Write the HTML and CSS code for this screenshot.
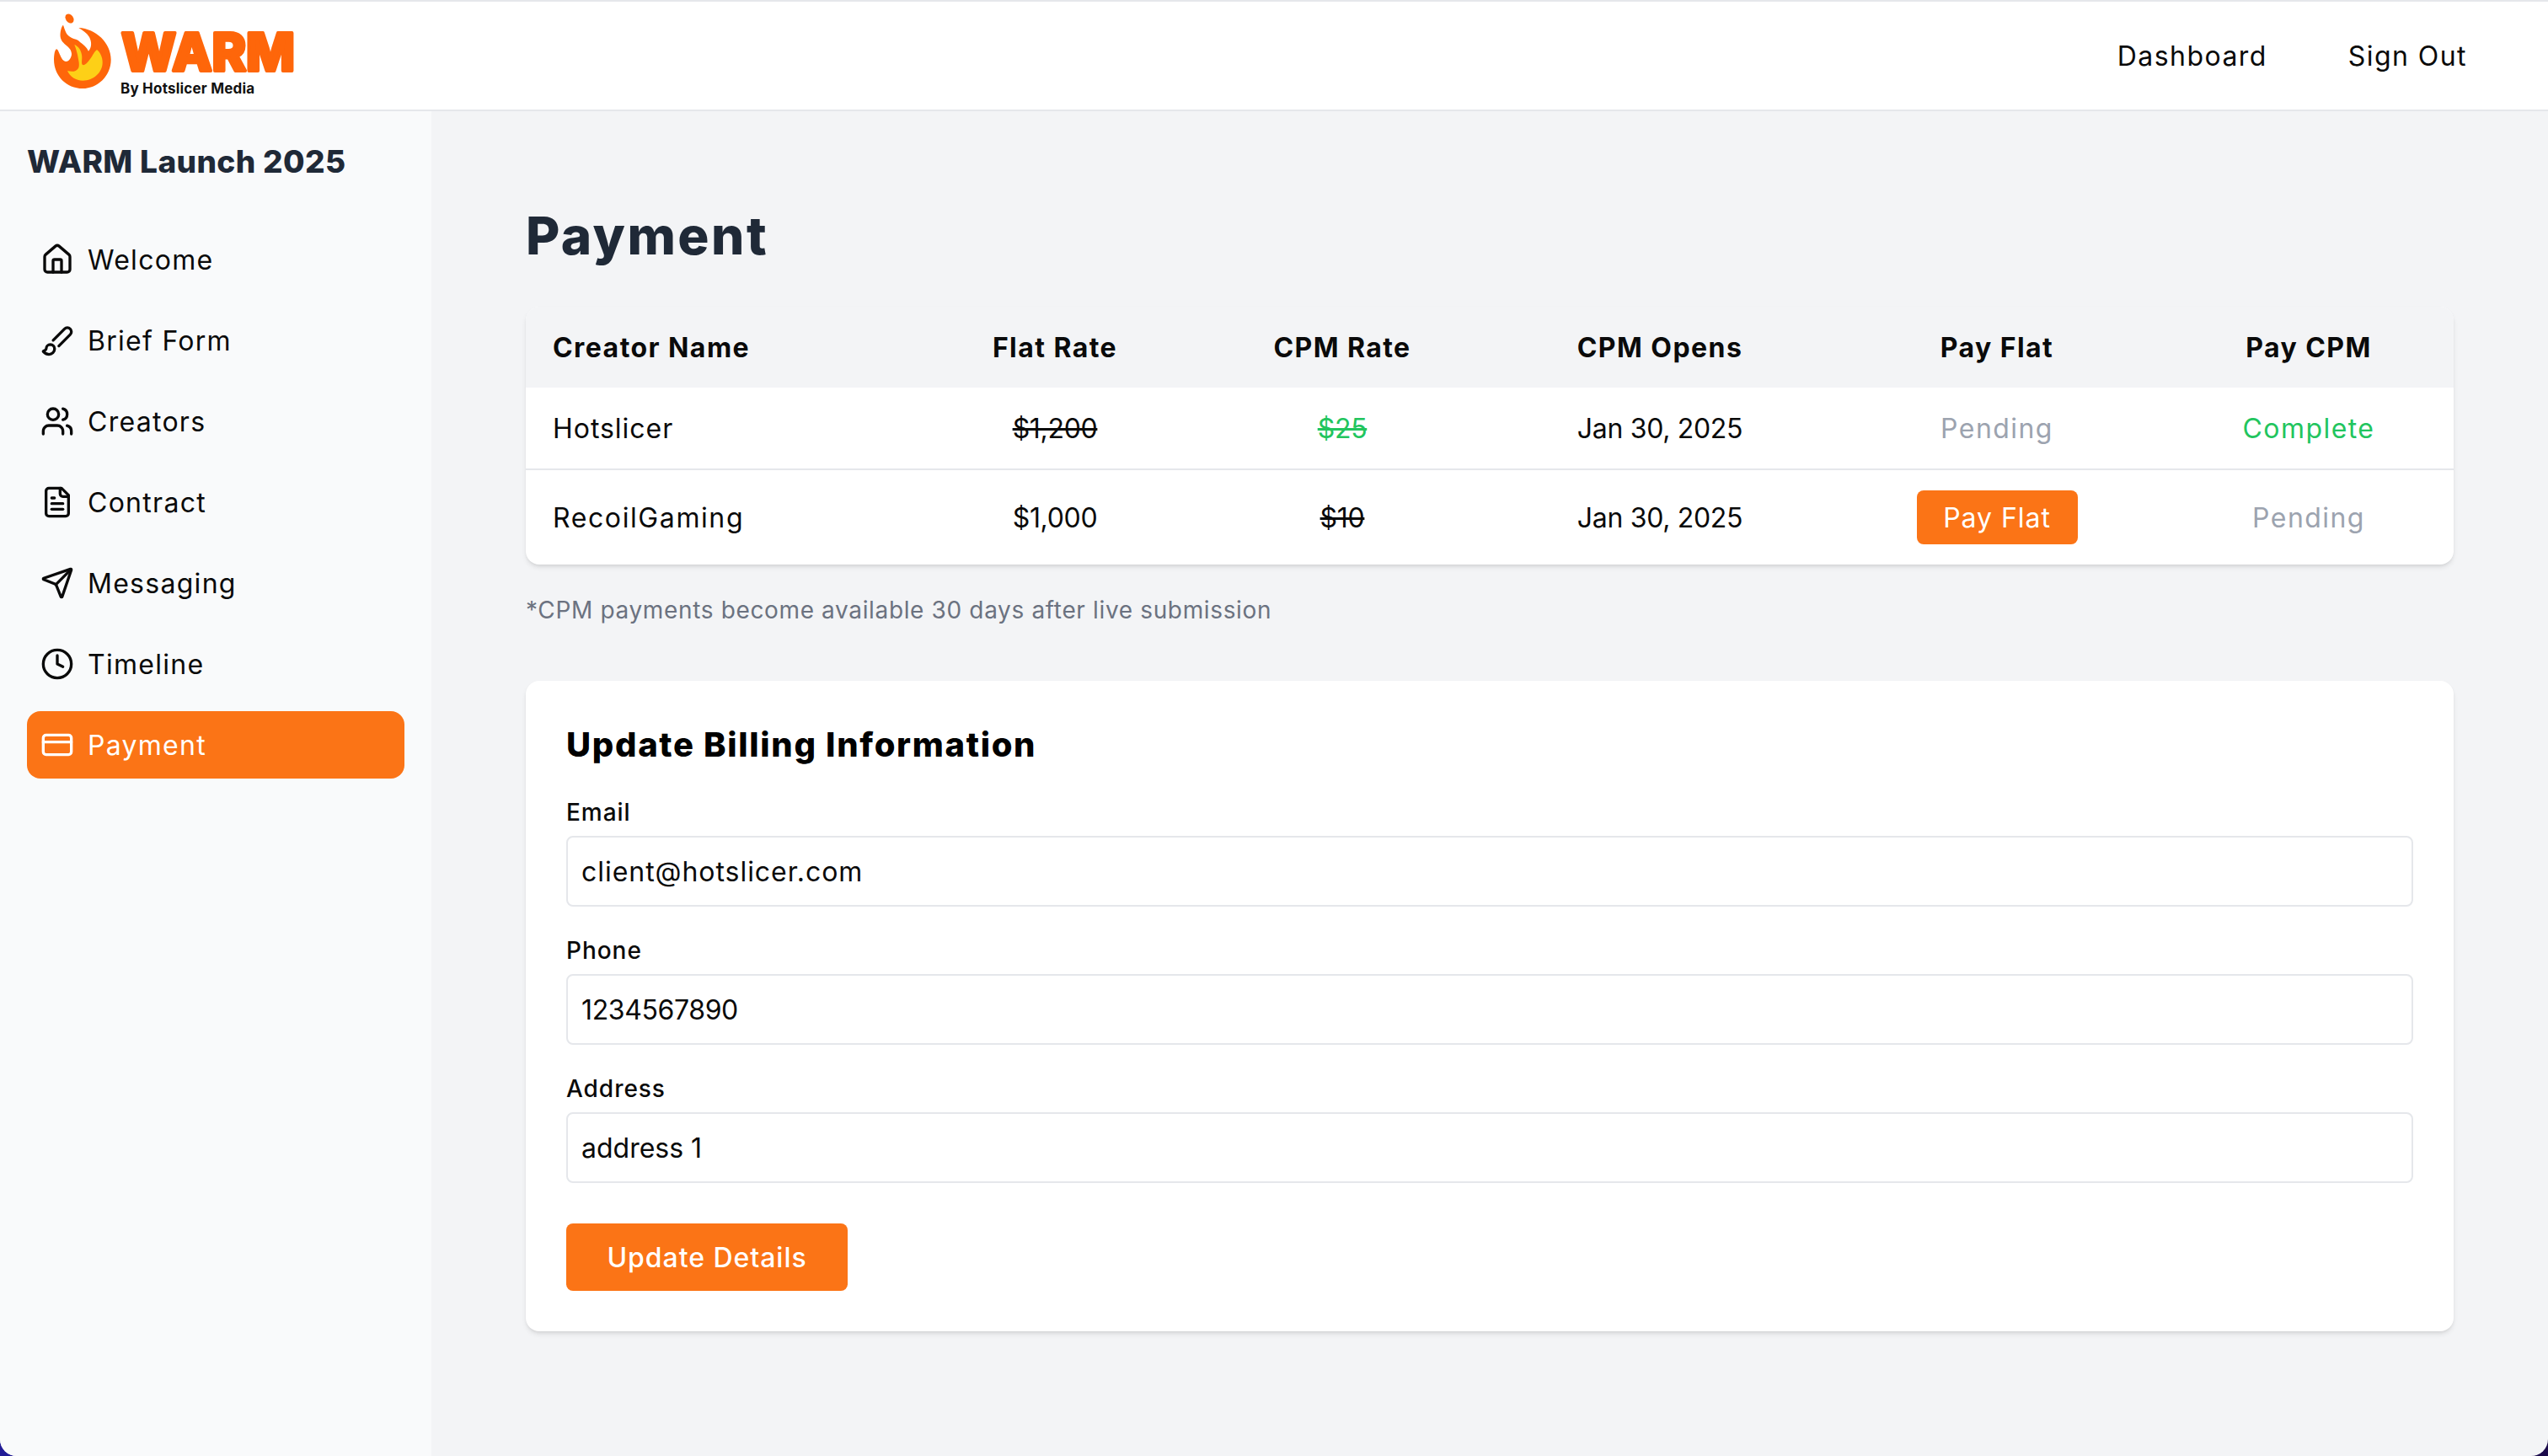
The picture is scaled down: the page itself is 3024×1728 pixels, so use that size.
FILE: index.html
```html
<!DOCTYPE html>
<html lang="en">
<head>
    <meta charset="utf-8">
    <title>Payment</title>
    <link rel="stylesheet" href="styles.css">
</head>
<body>
    <div class="app">
        <header class="topbar">
            <a class="logo" href="#">
                <svg class="logo-art" viewBox="0 0 300 104" width="300" height="104">
                    <ellipse cx="18.5" cy="7" rx="4.5" ry="6" transform="rotate(-35 18.5 7)" fill="#fe660a"/>
                    <path fill="#fe660a" d="M11 14.7C13 20 14 25 18 28C23 32 28 31 31 35C35 38 39 41 41 45.7C45 41 45 35 42 29C39 24 34 21 29.3 18C50 19 67.7 36 67.7 55.7C67.7 75 52 90 34 90C15 90 0 75 0 55.7C0 50 1 44 3 43.3C6 43 8 58 14.3 58C18 58 21 53 21 49C21 40 9 38 7.7 29C7 23 9 16 11 14.7Z"/>
                    <path fill="#fdd017" d="M24.3 38C29 40 32 44 33 50C34 55 32 60 34 62C37 63 40 59 43 55C46 51 48 46 51 44C55 47 57.7 53 57.7 59C57.7 71 47 80.7 34.3 80.7C26 80.7 19 76 16 69C20 70 26 71 29 66C31 62 29 56 28 50C27 46 26 42 24.3 38Z"/>
                    <text class="logo-word" x="80" y="69" textLength="206" lengthAdjust="spacingAndGlyphs">WARM</text>
                </svg>
                <span class="logo-by">By Hotslicer Media</span>
            </a>
            <nav class="topnav">
                <a href="#">Dashboard</a>
                <a href="#">Sign Out</a>
            </nav>
        </header>
        <div class="body-row">
            <aside class="sidebar">
                <h2>WARM Launch 2025</h2>
                <ul class="menu">
                    <li><a href="#">
                        <svg class="icon" viewBox="0 0 24 24"><path d="M15 21v-8a1 1 0 0 0-1-1h-4a1 1 0 0 0-1 1v8"/><path d="M3 10a2 2 0 0 1 .709-1.528l7-5.999a2 2 0 0 1 2.582 0l7 5.999A2 2 0 0 1 21 10v9a2 2 0 0 1-2 2H5a2 2 0 0 1-2-2z"/></svg>
                        Welcome</a></li>
                    <li><a href="#">
                        <svg class="icon" viewBox="0 0 24 24"><path d="m9.06 11.9 8.07-8.06a2.85 2.85 0 1 1 4.03 4.03l-8.06 8.08"/><path d="M7.07 14.94c-1.66 0-3 1.35-3 3.02 0 1.33-2.5 1.52-2 2.02 1.08 1.1 2.49 2.02 4 2.02 2.2 0 4-1.8 4-4.04a3.01 3.01 0 0 0-3-3.02z"/></svg>
                        Brief Form</a></li>
                    <li><a href="#">
                        <svg class="icon" viewBox="0 0 24 24"><path d="M16 21v-2a4 4 0 0 0-4-4H6a4 4 0 0 0-4 4v2"/><circle cx="9" cy="7" r="4"/><path d="M22 21v-2a4 4 0 0 0-3-3.87"/><path d="M16 3.13a4 4 0 0 1 0 7.75"/></svg>
                        Creators</a></li>
                    <li><a href="#">
                        <svg class="icon" viewBox="0 0 24 24"><path d="M15 2H6a2 2 0 0 0-2 2v16a2 2 0 0 0 2 2h12a2 2 0 0 0 2-2V7Z"/><path d="M14 2v4a2 2 0 0 0 2 2h4"/><path d="M10 9H8"/><path d="M16 13H8"/><path d="M16 17H8"/></svg>
                        Contract</a></li>
                    <li><a href="#">
                        <svg class="icon" viewBox="0 0 24 24"><path d="M14.536 21.686a.5.5 0 0 0 .937-.024l6.5-19a.496.496 0 0 0-.635-.635l-19 6.5a.5.5 0 0 0-.024.937l7.93 3.18a2 2 0 0 1 1.112 1.11z"/><path d="m21.854 2.147-10.94 10.939"/></svg>
                        Messaging</a></li>
                    <li><a href="#">
                        <svg class="icon" viewBox="0 0 24 24"><circle cx="12" cy="12" r="10"/><polyline points="12 6 12 12 16 14"/></svg>
                        Timeline</a></li>
                    <li><a class="active" href="#">
                        <svg class="icon" viewBox="0 0 24 24"><rect width="20" height="14" x="2" y="5" rx="2"/><line x1="2" x2="22" y1="10" y2="10"/></svg>
                        Payment</a></li>
                </ul>
            </aside>
            <main class="content">
                <h1>Payment</h1>
                <div class="table-box">
                    <table>
                        <colgroup>
                            <col class="col-name"><col class="col-flat"><col class="col-cpm">
                            <col class="col-opens"><col class="col-payflat"><col class="col-paycpm">
                        </colgroup>
                        <thead>
                            <tr>
                                <th class="left">Creator Name</th>
                                <th>Flat Rate</th>
                                <th>CPM Rate</th>
                                <th>CPM Opens</th>
                                <th>Pay Flat</th>
                                <th>Pay CPM</th>
                            </tr>
                        </thead>
                        <tbody>
                            <tr class="row-one">
                                <td class="left">Hotslicer</td>
                                <td class="num struck">$1,200</td>
                                <td class="num struck green">$25</td>
                                <td class="num">Jan 30, 2025</td>
                                <td class="status muted">Pending</td>
                                <td class="status green">Complete</td>
                            </tr>
                            <tr class="row-two">
                                <td class="left">RecoilGaming</td>
                                <td class="num">$1,000</td>
                                <td class="num struck">$10</td>
                                <td class="num">Jan 30, 2025</td>
                                <td><button class="btn btn-small">Pay Flat</button></td>
                                <td class="status muted">Pending</td>
                            </tr>
                        </tbody>
                    </table>
                </div>
                <p class="note">*CPM payments become available 30 days after live submission</p>
                <form class="card">
                    <h3>Update Billing Information</h3>
                    <div class="field">
                        <label>Email</label>
                        <input type="text" value="client@hotslicer.com">
                    </div>
                    <div class="field">
                        <label>Phone</label>
                        <input class="num" type="text" value="1234567890">
                    </div>
                    <div class="field">
                        <label>Address</label>
                        <input class="tight" type="text" value="address 1">
                    </div>
                    <button class="btn btn-big" type="button">Update Details</button>
                </form>
            </main>
        </div>
    </div>
</body>
</html>
```
FILE: styles.css
```css
html, body {
    margin: 0;
    padding: 0;
    height: 100%;
}
body {
    background: linear-gradient(90deg, #221c96, #1a0a4a);
    font-family: Inter, "Liberation Sans", sans-serif;
    color: #0a0a0a;
    font-size: 32px;
    letter-spacing: 0.03em;
}
a {
    color: inherit;
    text-decoration: none;
}
.app {
    height: 1728px;
    display: flex;
    flex-direction: column;
    overflow: hidden;
    border-radius: 0 0 20px 20px;
    background: #f3f4f6;
}

/* top bar */
.topbar {
    height: 128px;
    flex: none;
    display: flex;
    justify-content: space-between;
    align-items: center;
    background: #fff;
    border-top: 2px solid #e5e7eb;
    border-bottom: 2px solid #e5e7eb;
    padding: 0 96px 0 64px;
}
.logo {
    position: relative;
    display: block;
    width: 300px;
    height: 104px;
    margin-top: 2px;
}
.logo-art {
    display: block;
    overflow: visible;
}
.logo-word {
    font-family: Inter, sans-serif;
    font-weight: 800;
    font-size: 62px;
    letter-spacing: 0;
    fill: #fe660a;
    stroke: #fe660a;
    stroke-width: 4px;
    stroke-linejoin: round;
}
.logo-by {
    position: absolute;
    left: 79px;
    top: 80px;
    font-size: 17px;
    font-weight: 700;
    letter-spacing: 0.012em;
    color: #111;
    white-space: nowrap;
}
.topnav {
    display: flex;
    gap: 96px;
    letter-spacing: 0.045em;
}

.body-row {
    flex: 1;
    display: flex;
    min-height: 0;
}

/* sidebar */
.sidebar {
    width: 512px;
    flex: none;
    box-sizing: border-box;
    padding: 32px;
    background: #f9fafb;
}
.sidebar h2 {
    margin: 0 0 48px;
    font-size: 37px;
    line-height: 56px;
    font-weight: 800;
    letter-spacing: 0.01em;
    color: #1f2937;
}
.menu {
    list-style: none;
    margin: 0;
    padding: 0;
    display: flex;
    flex-direction: column;
    gap: 16px;
    letter-spacing: 0.04em;
}
.menu a {
    height: 80px;
    display: flex;
    align-items: center;
    gap: 16px;
    padding: 0 16px;
    border-radius: 16px;
}
.menu a.active {
    background: #fb7416;
    color: #fff;
}
.icon {
    width: 40px;
    height: 40px;
    flex: none;
    fill: none;
    stroke: currentColor;
    stroke-width: 2;
    stroke-linecap: round;
    stroke-linejoin: round;
}

/* main area */
.content {
    flex: 1;
    padding: 112px;
}
.content h1 {
    margin: 0 0 48px;
    font-size: 62px;
    line-height: 72px;
    font-weight: 800;
    letter-spacing: 0.04em;
    color: #1f2937;
}
.table-box {
    background: #fff;
    border-radius: 16px;
    overflow: hidden;
    box-shadow: 0 4px 6px -1px rgba(0,0,0,.1), 0 2px 4px -2px rgba(0,0,0,.1);
}
table {
    width: 100%;
    table-layout: fixed;
    border-collapse: collapse;
}
.col-name { width: 462px; }
.col-flat { width: 332px; }
.col-cpm { width: 350px; }
.col-opens { width: 404px; }
.col-payflat { width: 396px; }
.col-paycpm { width: 344px; }
th, td {
    padding: 0;
    text-align: center;
    font-size: 32px;
}
th {
    height: 96px;
    background: #f3f4f6;
    font-weight: 700;
    letter-spacing: 0.045em;
}
.left {
    text-align: left;
    padding-left: 32px;
}
.row-one td {
    height: 96px;
    border-bottom: 2px solid #e5e7eb;
}
.row-two td {
    height: 112px;
}
.row-two .left {
    letter-spacing: 0.05em;
}
.num { letter-spacing: -0.01em; }
.status { letter-spacing: 0.045em; }
.struck { text-decoration: line-through; }
.green { color: #22c55e; }
.muted { color: #9ca3af; }

.btn {
    border: 0;
    background: #fb7416;
    color: #fff;
    font-family: inherit;
    font-size: 32px;
    letter-spacing: 0.03em;
    font-weight: 500;
}
.btn-small {
    display: block;
    margin: 0 auto;
    width: 191px;
    height: 64px;
    border-radius: 8px;
    font-weight: 400;
}
.btn-big {
    display: block;
    margin-top: 48px;
    width: 334px;
    height: 80px;
    border-radius: 8px;
}

.note {
    margin: 34px 0 64px;
    font-size: 28px;
    line-height: 40px;
    letter-spacing: 0.023em;
    color: #6b7280;
}

/* billing form */
.card {
    display: block;
    background: #fff;
    border-radius: 16px;
    padding: 48px;
    box-shadow: 0 4px 6px -1px rgba(0,0,0,.1), 0 2px 4px -2px rgba(0,0,0,.1);
}
.card h3 {
    margin: 0 0 32px;
    font-size: 40px;
    line-height: 56px;
    font-weight: 800;
    letter-spacing: 0.042em;
    color: #000;
}
.field {
    margin-top: 32px;
}
.card h3 + .field {
    margin-top: 0;
}
.field label {
    display: block;
    font-size: 28px;
    line-height: 40px;
    font-weight: 500;
    margin-bottom: 8px;
}
.field input {
    display: block;
    box-sizing: border-box;
    width: 100%;
    height: 84px;
    padding: 0 16px;
    border: 2px solid #e5e7eb;
    border-radius: 8px;
    font-family: inherit;
    font-size: 32px;
    letter-spacing: 0.03em;
    color: #0a0a0a;
    background: #fff;
}
.field input.num { letter-spacing: -0.012em; }
.field input.tight { letter-spacing: 0; }
```
